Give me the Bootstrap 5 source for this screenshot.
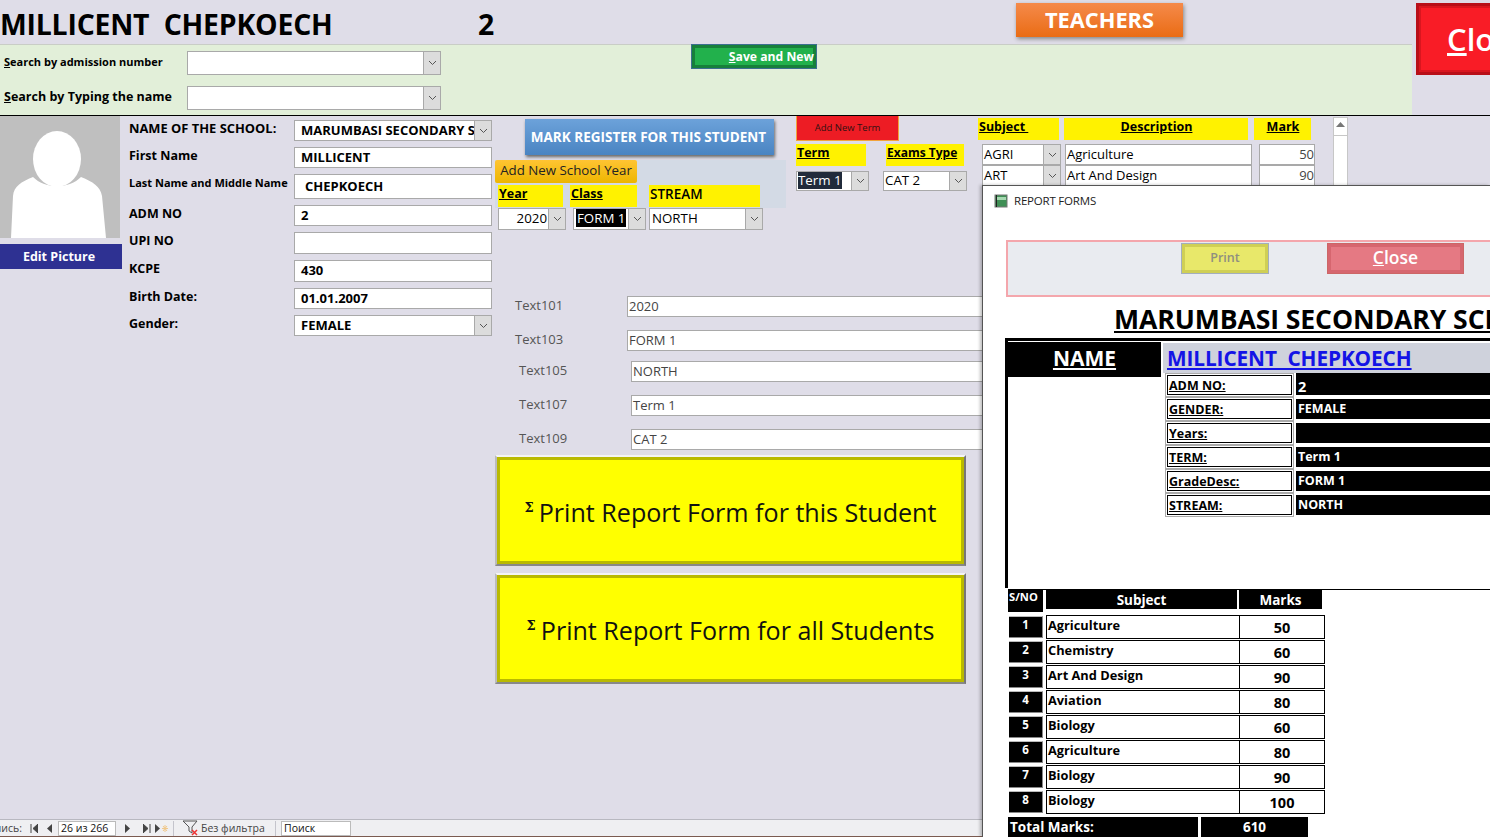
<!doctype html>
<html lang="en"><head><meta charset="utf-8"><title>Student form</title>
<link rel="stylesheet" href="https://cdn.jsdelivr.net/npm/bootstrap@5.3.0/dist/css/bootstrap.min.css">
<style>
:root{--lav:#dfdde8;--seg:"Open Sans","Noto Sans","Liberation Sans",sans-serif}
html,body{margin:0;height:100%;background:#fff;overflow:hidden}
body{font-family:var(--seg);color:#000;font-size:13px}
.app{position:relative;width:1490px;height:837px;overflow:hidden;background:var(--lav);padding-top:3px}
.hdr{height:41px}
.ttl{font-size:28.4px;font-weight:700;line-height:43px;margin:0;white-space:pre;width:478px;letter-spacing:-.2px}
.ttlnum{font-size:28.4px;font-weight:700;line-height:43px;width:538px}
.teach{width:167px;height:34px;border:0;border-radius:0;background:linear-gradient(#f58a4b,#ea6c14);color:#fff;font-size:21.8px;font-weight:700;padding:0;box-shadow:1px 2px 4px #888;line-height:34px}
.band{width:1412px;height:71px;background:#e2efd9;border-top:1px solid #c9cdc6}
.srch{width:441px;padding:6px 0 0 4px;gap:11px}
.srow{height:24px;font-size:12.5px;font-weight:700}
.srow .slab{width:183px;line-height:21px}
.slab-s{font-size:11px}
.srow .cmb{width:254px}
.save{width:126px;height:25px;margin:-1px 0 0 250px;background:#22b14c;border:1px solid #3b6f8f;border-radius:0;box-shadow:inset 0 0 0 3px #17803a;color:#fff;font-weight:700;font-size:12.2px;padding:0 2px 0 0;text-align:right;line-height:22px}
.closeb{position:absolute;left:1416px;top:3px;width:110px;height:72px;background:#f91c26;border:3px solid #b80f18;box-shadow:inset 0 0 0 2px #d9161f;color:#fff;font-size:31px;font-weight:600;text-align:left;padding:0 0 0 28px;border-radius:0}
.mainz{border-top:1px solid #000;height:704px}
.photo{width:122px}
.avatar{display:block;width:120px;height:122px}
.editp{display:block;width:122px;height:25px;margin-top:6px;background:#2e3192;color:#fff;font-weight:700;font-size:12.5px;text-align:center;line-height:23px;padding:0 4px 0 0;border:0;border-radius:0}
.fcol{width:363px;margin-left:7px;padding-top:4px;gap:6px}
.frow{font-weight:700;font-size:12.5px;line-height:17px}
.flab{width:165px;flex:none}
.flab-s{font-size:11px}
.flab-l{font-size:12.9px}
.h21{height:21px}.h22{height:22px}.h25{height:25px}
.fld,.cmb{display:flex;height:100%;background:#fff;border:1px solid #a9a9a9;border-radius:0;padding:0 0 2px;color:#000;font-size:13px;line-height:18px;min-width:0}
.frow .fld,.frow .cmb{flex:1;padding-left:6px;font-weight:700;align-items:center;overflow:hidden;white-space:nowrap}
.cmb{position:relative;overflow:hidden;align-items:center}
.frow .cmb{padding-left:6px}
.fld-in{padding-left:10px!important}
.arr{position:absolute;right:0;top:0;bottom:0;width:17px;background:#dcdcdc;border-left:1px solid #a9a9a9;display:flex;align-items:center;justify-content:center}
.arr svg{width:9px;height:6px}
.rgt{width:995px;margin-left:3px}
.toprow{height:180px}
.ccol{width:291px}
.mark{display:block;margin:3px 0 0 30px;width:249px;height:36px;border:0;border-radius:0;background:linear-gradient(#6ca2da,#4a84c2);color:#fff;font-size:13.5px;font-weight:700;box-shadow:1px 2px 3px #666;padding:0 2px 0 0}
.ybox{margin-top:5px;height:48px;background:#d3dae5}
.addy{width:142px;height:23px;background:linear-gradient(#ffc433,#edb600);border:0;border-radius:2px;padding:0 0 3px;font-size:13.3px;color:#222;display:block;line-height:19px}
.ylab{background:#fff200;font-weight:700;font-size:12.5px;line-height:18px;height:22px;text-decoration:underline;padding-left:1px}
.ylabs{margin:2px 0 0 3px}
.w-year{width:65px}.w-class{width:67px;margin-left:7px}.w-stream{width:111px;margin-left:12px;text-decoration:none;font-size:13.5px;font-weight:600}
.ycmb{height:21px;margin-left:3px}
.ycmb .cmb{font-size:13.3px;padding-left:2px;height:22px}
.c-year{width:68px;justify-content:flex-end;padding-right:18px}
.c-class{width:73px;margin-left:7px;padding-left:1px}
.c-stream{width:114px;margin-left:3px}
.sel-k{background:#000;color:#fff;padding:0 1px}
.sel-d{background:#212b3b;color:#fff}
.dcol{width:171px;margin-left:10px}
.addt{display:block;width:103px;height:25px;background:#ed1c24;border:1px solid #f2a33a;border-top:0;border-radius:0;padding:0;font-size:9.5px;color:#311;line-height:22px}
.tlab{height:21px;margin-top:3px}
.w-term{width:70px}.w-exam{width:78px;margin-left:20px;font-size:12px}
.tcmb{margin-top:6px;height:20px}
.tcmb .cmb{font-size:13.3px;padding-left:1px}
.c-term{width:73px}.c-cat{width:84px;margin-left:14px;padding-left:1px!important}
.ecol{margin-left:11px;width:370px}
.elab{margin-top:2px;height:21px}
.w-subj{width:81px}.w-desc{width:184px;margin-left:5px;text-align:center}.w-mrk{width:57px;margin-left:6px;text-align:center}
.grow{height:21px;margin-left:4px;font-size:13px}
.grow1{margin-top:5px}
.g-sub{width:79px;padding-left:1px;height:100%}
.g-desc{width:187px;margin-left:4px;padding-left:1px;align-items:center}
.g-mrk{width:56px;margin-left:7px;justify-content:flex-end;align-items:center;color:#444}
.vsb{width:15px;margin-left:18px;height:69px;margin-top:1px;background:#fff;border:1px solid #c7c7c7;border-bottom:0}
.vsb b{display:block;height:14px;border-bottom:1px solid #c7c7c7;position:relative}
.vsb svg{display:block;width:9px;height:5px;margin:4px auto 0}
.trow{height:21px;font-size:13px;color:#555;font-weight:500}
.trow .fld{color:#444;padding-left:1px;align-items:center;width:420px;border-right:0}
.tl1{padding-left:20px}.tl2{padding-left:24px}
.tlabl{width:112px;line-height:18px}
.g13{margin-top:13px}.g10{margin-top:10px}
.pbtn{display:flex;align-items:center;justify-content:center;width:471px;height:111px;background:#ff0;border:2px solid;border-color:#f4f4f4 #777 #888 #bbb;box-shadow:inset 0 0 0 3px #b9b900;border-radius:0;font-size:25.1px;color:#111;padding:4px 0 0;margin-top:5px;white-space:nowrap}
.pbtn+.pbtn{margin-top:7px}
.sig{font-size:13px;line-height:1;align-self:center;margin:-10px 5px 0 0;font-weight:700;font-family:"DejaVu Serif",serif}
.stbar{position:absolute;left:0;right:0;bottom:0;height:18px;background:#efeff2;border-top:1px solid #b8b8c0;border-bottom:1px solid #7a5a50;font-size:10.5px;line-height:15px;color:#444;white-space:nowrap}
.stbar svg{display:block;flex:none}
.sb-p{width:30px;padding-right:8px;overflow:hidden;justify-content:flex-end}
.sb-in{background:#fff;border:1px solid #bbb;height:15px;color:#111;padding-left:2px;line-height:13px}
.sb-26{width:58px;margin:0 9px 0 6px}
.sb-q{width:70px;margin-left:5px}
.sb-s{width:1px;height:15px;background:#c4c4cc}
.sb-f{margin-left:1px;width:66px}
.win{position:absolute;left:982px;top:185px;width:508px;height:652px;background:#fff;border-left:1px solid #555;border-top:1px solid #555;overflow:hidden;box-shadow:-2px 0 3px rgba(0,0,0,.25)}
.wtit{height:29px;padding-left:11px;font-size:11.5px;letter-spacing:-.2px;color:#222;line-height:29px}
.wtit svg{width:14px;height:14px;margin-right:6px}
.pink{margin:25px -10px 0 23px;height:57px;background:#e9ebf0;border:2px solid #f4a6ac;padding-top:1px}
.wp{margin-left:173px;width:88px;height:31px;background:#e8e86a;border:1px solid #a3aebd;box-shadow:inset 0 0 0 3px #cfcf55;color:#8f8f80;font-size:12.5px;font-weight:600;border-radius:0;padding:0}
.wp:disabled{opacity:1;background:#e8e86a;border-color:#a3aebd;color:#8f8f80}
.wc{margin-left:58px;width:137px;height:31px;background:#e57983;border:1px solid #c66;box-shadow:inset 0 0 0 3px #d6666f;color:#fff;font-size:17.5px;font-weight:600;border-radius:0;padding:0 0 4px;line-height:24px}
.sch{margin:5px 0 0 131px;font-size:26.6px;font-weight:700;line-height:34px;white-space:nowrap;text-decoration:underline;height:36px;letter-spacing:-.1px}
.blk{margin-left:22px;height:250px;border-top:3px solid #000;border-left:3px solid #000}
.nmc{width:153px;height:36px;background:#000;color:#fff;font-size:21px;font-weight:700;text-align:center;text-decoration:underline;line-height:32px;border-top:1px solid #fff;flex:none}
.nmb{margin:2px 0 0 2px;width:400px;height:30px;background:#cfd2dc;color:#1414e6;font-size:20.8px;font-weight:700;text-decoration:underline;line-height:30px;padding-left:4px;white-space:pre;letter-spacing:-.1px}
.inf{height:24px;margin-left:4px}
.ilab{width:129px;height:24px;border:1px solid #aaa;padding:1px}
.ilab div{height:100%;border:1px solid #000;padding-left:1px;font-weight:700;font-size:12.5px;line-height:20px;text-decoration:underline}
.ival{width:300px;height:20px;margin:2px 0 0 2px;background:#000;color:#fff;font-weight:700;font-size:12.5px;line-height:20px;padding-left:2px}
.ival-a{height:22px;margin-top:0;font-size:14.5px;line-height:27px}
.tbl{border-top:1px solid #000;margin:1px 0 0 25px}
.thd{height:25px}
.th1{width:35px;height:22px;background:#000;color:#fff;font-weight:700;font-size:11.2px;line-height:14px;padding-left:1px}
.th2{width:191px;height:19px;background:#000;color:#fff;font-weight:700;font-size:13.5px;text-align:center;line-height:20px;margin-left:3px}
.th3{width:83px;height:19px;background:#000;color:#fff;font-weight:700;font-size:13.5px;text-align:center;line-height:20px;margin-left:2px}
.tr1{height:25px;font-weight:700}
.tsn{width:34px;height:22px;margin:1px 0 0 1px;background:#000;color:#fff;text-align:center;font-size:11.5px;line-height:16px;border-top:1px solid #bbb;border-right:1px solid #888;border-bottom:1px solid #888}
.tsb{width:194px;height:24px;margin-left:3px;border:1px solid #000;font-size:12.8px;padding-left:1px;line-height:19px}
.tmk{width:85px;height:24px;border:1px solid #000;border-left:0;font-size:14.5px;text-align:center;line-height:23px}
.ttot{height:20px;margin-top:2px;color:#fff;font-weight:700;font-size:13.5px;line-height:20px}
.tt1{width:190px;background:#000;padding-left:2px}
.tt2{width:107px;background:#000;margin-left:3px;text-align:center}
.us{text-decoration:underline}
</style></head>
<body>
<svg width="0" height="0" class="position-absolute"><defs><symbol id="chev" viewBox="0 0 9 6"><path d="M1 1l3.5 3.5L8 1" fill="none" stroke="#555" stroke-width="1"/></symbol></defs></svg>
<div class="app">
  <div class="d-flex hdr">
    <h1 class="ttl">MILLICENT  CHEPKOECH</h1>
    <div class="ttlnum">2</div>
    <button class="btn teach" type="button">TEACHERS</button>
  </div>
  <div class="band d-flex">
    <div class="srch d-flex flex-column">
      <div class="srow d-flex"><div class="slab slab-s"><span class="us">S</span>earch by admission number</div><div class="cmb"><span class="arr"><svg><use href="#chev"/></svg></span></div></div>
      <div class="srow d-flex"><div class="slab"><span class="us">S</span>earch by Typing the name</div><div class="cmb"><span class="arr"><svg><use href="#chev"/></svg></span></div></div>
    </div>
    <button class="btn save" type="button"><span class="us">S</span>ave and New</button>
  </div>
  <button class="btn closeb" type="button"><span class="us">C</span>lose</button>
  <div class="mainz d-flex">
    <div class="photo">
      <svg class="avatar" viewBox="0 0 120 122"><rect width="120" height="122" fill="#bfbfbf"/><ellipse cx="57" cy="43" rx="24" ry="28" fill="#fff"/><path d="M11 122l2-42c1-10 8-14 20-19 6 6 14 9 24 9s18-3 24-9c12 5 19 9 21 19l4 42z" fill="#fff"/></svg>
      <button class="btn editp" type="button">Edit Picture</button>
    </div>
    <div class="fcol d-flex flex-column">
      <div class="frow h21 d-flex"><div class="flab flab-l">NAME OF THE SCHOOL:</div><div class="cmb">MARUMBASI SECONDARY SCHOOL<span class="arr"><svg><use href="#chev"/></svg></span></div></div>
      <div class="frow h21 d-flex"><div class="flab">First Name</div><div class="fld">MILLICENT</div></div>
      <div class="frow h25 d-flex"><div class="flab flab-s">Last Name and Middle Name</div><div class="fld fld-in">CHEPKOECH</div></div>
      <div class="frow h21 d-flex"><div class="flab">ADM NO</div><div class="fld">2</div></div>
      <div class="frow h22 d-flex"><div class="flab">UPI NO</div><div class="fld"></div></div>
      <div class="frow h22 d-flex"><div class="flab">KCPE</div><div class="fld">430</div></div>
      <div class="frow h21 d-flex"><div class="flab">Birth Date:</div><div class="fld">01.01.2007</div></div>
      <div class="frow h21 d-flex"><div class="flab">Gender:</div><div class="cmb">FEMALE<span class="arr"><svg><use href="#chev"/></svg></span></div></div>
    </div>
    <div class="rgt">
      <div class="toprow d-flex">
        <div class="ccol">
          <button class="btn mark" type="button">MARK REGISTER FOR THIS STUDENT</button>
          <div class="ybox">
            <button class="btn addy" type="button">Add New School Year</button>
            <div class="d-flex ylabs"><div class="ylab w-year">Year</div><div class="ylab w-class">Class</div><div class="ylab w-stream">STREAM</div></div>
          </div>
          <div class="d-flex ycmb">
            <div class="cmb c-year">2020<span class="arr"><svg><use href="#chev"/></svg></span></div>
            <div class="cmb c-class"><span class="sel-k">FORM 1</span><span class="arr"><svg><use href="#chev"/></svg></span></div>
            <div class="cmb c-stream">NORTH<span class="arr"><svg><use href="#chev"/></svg></span></div>
          </div>
        </div>
        <div class="dcol">
          <button class="btn addt" type="button">Add New Term</button>
          <div class="d-flex tlab"><div class="ylab w-term">Term</div><div class="ylab w-exam">Exams Type</div></div>
          <div class="d-flex tcmb">
            <div class="cmb c-term"><span class="sel-d">Term 1</span><span class="arr"><svg><use href="#chev"/></svg></span></div>
            <div class="cmb c-cat">CAT 2<span class="arr"><svg><use href="#chev"/></svg></span></div>
          </div>
        </div>
        <div class="ecol d-flex">
          <div>
            <div class="d-flex elab"><div class="ylab w-subj">Subject&nbsp;</div><div class="ylab w-desc">Description</div><div class="ylab w-mrk">Mark</div></div>
            <div class="d-flex grow grow1"><div class="cmb g-sub">AGRI<span class="arr"><svg><use href="#chev"/></svg></span></div><div class="fld g-desc">Agriculture</div><div class="fld g-mrk">50</div></div>
            <div class="d-flex grow"><div class="cmb g-sub">ART<span class="arr"><svg><use href="#chev"/></svg></span></div><div class="fld g-desc">Art And Design</div><div class="fld g-mrk">90</div></div>
          </div>
          <div class="vsb"><b><svg viewBox="0 0 9 5"><path d="M4.500 0L9 5H0z" fill="#777"/></svg></b></div>
        </div>
      </div>
      <div class="trow d-flex tl1"><div class="tlabl">Text101</div><div class="fld">2020</div></div>
      <div class="trow d-flex tl1 g13"><div class="tlabl">Text103</div><div class="fld">FORM 1</div></div>
      <div class="trow d-flex tl2 g10"><div class="tlabl">Text105</div><div class="fld">NORTH</div></div>
      <div class="trow d-flex tl2 g13"><div class="tlabl">Text107</div><div class="fld">Term 1</div></div>
      <div class="trow d-flex tl2 g13"><div class="tlabl">Text109</div><div class="fld">CAT 2</div></div>
      <button class="btn pbtn" type="button"><span class="sig">Σ</span>Print Report Form for this Student</button>
      <button class="btn pbtn" type="button"><span class="sig">Σ</span>Print Report Form for all Students</button>
    </div>
  </div>
  <div class="stbar d-flex align-items-center">
    <div class="sb-p d-flex">Запись:</div>
    <svg width="8" height="9" viewBox="0 0 8 9"><path d="M1 0v9M8 0v9L3 4.500z" stroke="#444" fill="#444"/></svg>
    <svg class="ms-2" width="6" height="9" viewBox="0 0 6 9"><path d="M6 0v9L1 4.500z" fill="#444"/></svg>
    <div class="sb-in sb-26">26 из 266</div>
    <svg class="me-2" width="6" height="9" viewBox="0 0 6 9"><path d="M0 0v9l5-4.500z" fill="#444"/></svg>
    <svg class="ms-1" width="8" height="9" viewBox="0 0 8 9"><path d="M0 0v9l5-4.500zM7 0v9" stroke="#444" fill="#444"/></svg>
    <svg class="ms-1" width="14" height="9" viewBox="0 0 14 9"><path d="M0 0v9l5-4.500z" fill="#444"/><path d="M10 1v7M7 4.500h6M8 2l4 5M12 2l-4 5" stroke="#f0c88a"/></svg>
    <div class="sb-s ms-1 me-2"></div>
    <svg width="18" height="16" viewBox="0 0 18 16"><path d="M1 1h14L10 7v6L7 11V7z" fill="none" stroke="#555"/><path d="M10 10l5 5M15 10l-5 5" stroke="#e33" stroke-width="1.500"/></svg>
    <div class="sb-f">Без фильтра</div>
    <div class="sb-s ms-2"></div>
    <div class="sb-in sb-q">Поиск</div>
  </div>
  <div class="win">
    <div class="wtit d-flex align-items-center"><svg viewBox="0 0 14 14"><rect x="1" y="1" width="12" height="12" fill="#3f8f55" stroke="#777"/><rect x="3" y="3" width="9" height="3" fill="#a5d8b0"/><path d="M2.500 1v12" stroke="#222"/></svg>REPORT FORMS</div>
    <div class="pink d-flex"><button class="btn wp" type="button" disabled>Print</button><button class="btn wc" type="button"><span class="us">C</span>lose</button></div>
    <div class="sch">MARUMBASI SECONDARY SCHOOL</div>
    <div class="blk d-flex">
      <div class="nmc">NAME</div>
      <div>
        <div class="nmb">MILLICENT  CHEPKOECH</div>
        <div class="d-flex inf"><div class="ilab"><div>ADM NO:</div></div><div class="ival ival-a">2</div></div>
        <div class="d-flex inf"><div class="ilab"><div>GENDER:</div></div><div class="ival">FEMALE</div></div>
        <div class="d-flex inf"><div class="ilab"><div>Years:</div></div><div class="ival"></div></div>
        <div class="d-flex inf"><div class="ilab"><div>TERM:</div></div><div class="ival">Term 1</div></div>
        <div class="d-flex inf"><div class="ilab"><div>GradeDesc:</div></div><div class="ival">FORM 1</div></div>
        <div class="d-flex inf"><div class="ilab"><div>STREAM:</div></div><div class="ival">NORTH</div></div>
      </div>
    </div>
    <div class="tbl">
      <div class="d-flex thd"><div class="th1">S/NO</div><div class="th2">Subject</div><div class="th3">Marks</div></div>
      <div class="d-flex tr1"><div class="tsn">1</div><div class="tsb">Agriculture</div><div class="tmk">50</div></div>
      <div class="d-flex tr1"><div class="tsn">2</div><div class="tsb">Chemistry</div><div class="tmk">60</div></div>
      <div class="d-flex tr1"><div class="tsn">3</div><div class="tsb">Art And Design</div><div class="tmk">90</div></div>
      <div class="d-flex tr1"><div class="tsn">4</div><div class="tsb">Aviation</div><div class="tmk">80</div></div>
      <div class="d-flex tr1"><div class="tsn">5</div><div class="tsb">Biology</div><div class="tmk">60</div></div>
      <div class="d-flex tr1"><div class="tsn">6</div><div class="tsb">Agriculture</div><div class="tmk">80</div></div>
      <div class="d-flex tr1"><div class="tsn">7</div><div class="tsb">Biology</div><div class="tmk">90</div></div>
      <div class="d-flex tr1"><div class="tsn">8</div><div class="tsb">Biology</div><div class="tmk">100</div></div>
      <div class="d-flex ttot"><div class="tt1">Total Marks:</div><div class="tt2">610</div></div>
    </div>
  </div>
</div>
<script src="https://cdn.jsdelivr.net/npm/bootstrap@5.3.0/dist/js/bootstrap.bundle.min.js"></script>
</body></html>
